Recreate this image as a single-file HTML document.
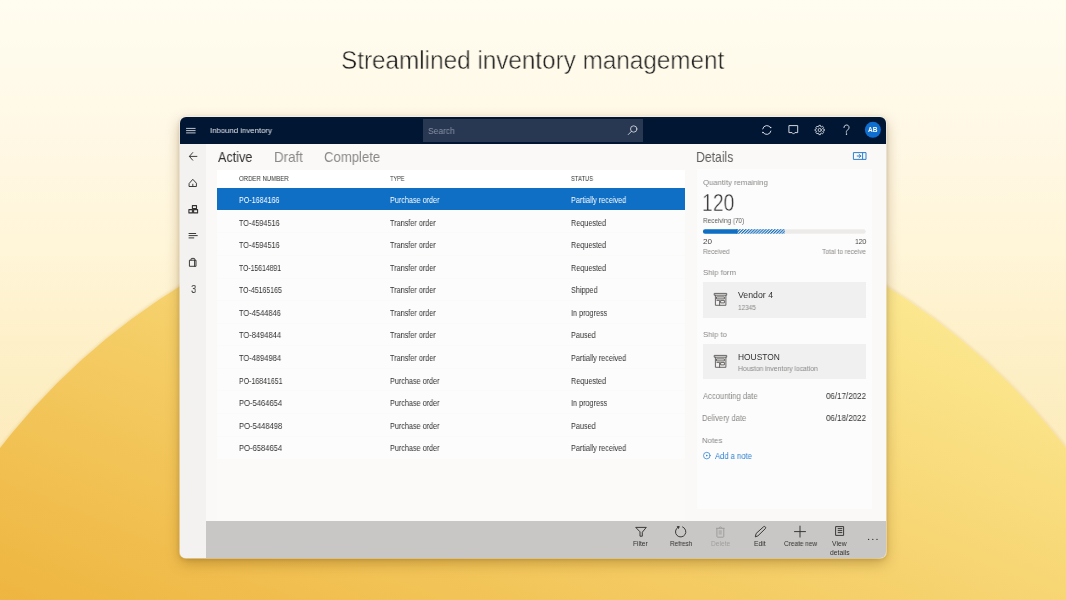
<!DOCTYPE html>
<html><head><meta charset="utf-8">
<style>
*{margin:0;padding:0;box-sizing:border-box}
html,body{width:1066px;height:600px;overflow:hidden}
body{position:relative;font-family:"Liberation Sans",sans-serif;
background:linear-gradient(180deg,#fffdf0 0px,#fff8e6 130px,#fff5d8 250px,#fdefc5 370px,#fcebbd 460px,#fbe8b6 600px)}
.a{position:absolute}
.t{position:absolute;white-space:nowrap;line-height:1;transform-origin:0 0;will-change:transform}
#circle{left:-140px;top:186px;width:1346px;height:1346px;border-radius:50%;
background:linear-gradient(22deg,#eeb43e 51.4%,#fce992 89%);box-shadow:0 0 3px 1px rgba(190,130,20,.18)}
#win{left:180px;top:117px;width:706px;height:441px;border-radius:6px;overflow:hidden;background:#faf9f8;
box-shadow:0 0 0 0.8px rgba(255,255,255,.55),0 5px 14px rgba(110,70,0,.36),0 1px 4px rgba(60,40,0,.18)}
</style></head><body>
<div id="circle" class="a"></div>
<div id="win" class="a">
  <div class="a" style="left:0;top:0;width:706px;height:26.8px;background:#001633"></div>
  <div class="a" style="left:242.5px;top:2px;width:220.8px;height:22.7px;background:#283752"></div>
  <div class="a" style="left:0;top:26.8px;width:26.2px;height:420px;background:#f3f2f1"></div>
  <div class="a" style="left:26px;top:404px;width:680px;height:37px;background:#c8c7c6"></div>
  <!-- table -->
  <div class="a" style="left:37px;top:52.7px;width:468.3px;height:18.1px;background:#ffffff"></div>
  <div class="a" style="left:37px;top:70.8px;width:468.3px;height:270.8px;background:#fcfcfc"></div>
  <div class="a" style="left:37px;top:70.8px;width:468.3px;height:21.9px;background:#0f6fc5"></div>
  <div class="a" style="left:37px;top:115.44px;width:468.3px;height:1px;background:#fafaf9"></div>
  <div class="a" style="left:37px;top:138.01px;width:468.3px;height:1px;background:#fafaf9"></div>
  <div class="a" style="left:37px;top:160.58px;width:468.3px;height:1px;background:#fafaf9"></div>
  <div class="a" style="left:37px;top:183.15px;width:468.3px;height:1px;background:#fafaf9"></div>
  <div class="a" style="left:37px;top:205.72px;width:468.3px;height:1px;background:#fafaf9"></div>
  <div class="a" style="left:37px;top:228.29px;width:468.3px;height:1px;background:#fafaf9"></div>
  <div class="a" style="left:37px;top:250.86px;width:468.3px;height:1px;background:#fafaf9"></div>
  <div class="a" style="left:37px;top:273.43px;width:468.3px;height:1px;background:#fafaf9"></div>
  <div class="a" style="left:37px;top:296.00px;width:468.3px;height:1px;background:#fafaf9"></div>
  <div class="a" style="left:37px;top:318.57px;width:468.3px;height:1px;background:#fafaf9"></div>
  <div class="a" style="left:37px;top:92.7px;width:468.3px;height:1px;background:#ffffff"></div>
  <div class="a" style="left:37px;top:341.6px;width:468.3px;height:62.5px;background:#fbfaf9"></div>
  <!-- details card -->
  <div class="a" style="left:517px;top:52.3px;width:175px;height:340px;background:#fcfcfc"></div>
  <div class="a" style="left:523px;top:165.1px;width:163.2px;height:35.6px;background:#f0f0f0"></div>
  <div class="a" style="left:523px;top:227px;width:163.2px;height:35.1px;background:#f0f0f0"></div>
</div>
<svg class="a" style="left:0;top:0" width="1066" height="600" viewBox="0 0 1066 600" fill="none" stroke-linecap="round" stroke-linejoin="round">
  <!-- hamburger -->
  <g stroke="#d6d9df" stroke-width="0.9">
    <path d="M186.5 128.4H195.2M186.5 130.6H195.2M186.5 132.9H195.2"/>
  </g>
  <!-- search icon -->
  <g stroke="#cfd3da" stroke-width="0.9">
    <circle cx="633.7" cy="129" r="3.2"/>
    <path d="M631.4 131.4L628.2 134.6"/>
  </g>
  <!-- sync -->
  <g stroke="#dfe2e8" stroke-width="0.95">
    <path d="M762.7 128.9A4.3 4.3 0 0 1 770.6 127.7"/>
    <path d="M770.9 131.1A4.3 4.3 0 0 1 763 132.3"/>
    <circle cx="770.7" cy="127.6" r="0.75" fill="#dfe2e8" stroke="none"/>
    <circle cx="762.9" cy="132.4" r="0.75" fill="#dfe2e8" stroke="none"/>
  </g>
  <!-- chat -->
  <g stroke="#dfe2e8" stroke-width="0.95">
    <path d="M789.3 125.6H797.7V132.6H794.9L793.5 134.1L792.1 132.6H789.3Z"/>
  </g>
  <!-- gear -->
  <g stroke="#dfe2e8" stroke-width="0.85">
    <path d="M823.04 128.97L824.33 129.20L824.33 130.80L823.04 131.03L822.80 131.63L823.54 132.71L822.41 133.84L821.33 133.10L820.73 133.34L820.50 134.63L818.90 134.63L818.67 133.34L818.07 133.10L816.99 133.84L815.86 132.71L816.60 131.63L816.36 131.03L815.07 130.80L815.07 129.20L816.36 128.97L816.60 128.37L815.86 127.29L816.99 126.16L818.07 126.90L818.67 126.66L818.90 125.37L820.50 125.37L820.73 126.66L821.33 126.90L822.41 126.16L823.54 127.29L822.80 128.37Z"/>
    <circle cx="819.7" cy="130" r="1.6"/>
  </g>
  <!-- ? -->
  <g stroke="#dfe2e8" stroke-width="0.9">
    <path d="M843.9 127.6A2.6 2.6 0 1 1 847.6 129.9C846.6 130.5 846.3 131.1 846.3 132.3"/>
    <circle cx="846.3" cy="134.1" r="0.3" fill="#dfe2e8"/>
  </g>
  <!-- avatar -->
  <circle cx="872.9" cy="129.8" r="8" fill="#0f6fd0"/>
  <!-- rail icons -->
  <g stroke="#323130" stroke-width="0.95">
    <path d="M196.9 156.4H189.6M192.7 152.6L189.4 156.4L192.7 160.2"/>
    <path d="M189.4 183.2L192.8 179.3L196.4 183.2V186.5H189.4ZM192.8 186.5V184.2"/>
    <path d="M192.4 205.6H196.5V208.6H192.4ZM188.9 209.6H192.4V212.9H188.9ZM193.6 209.6H197.6V212.9H193.6Z" stroke-width="1.1"/>
    <path d="M189 233.5H195.7M189 235.6H197.3M189 237.9H193.8"/>
    <path d="M189.8 260.2H196V266.3H189.8ZM191 260.1V259.2Q191 258.4 191.8 258.4H194Q194.8 258.4 194.8 259.2V260.1M194.6 260.4V266.2"/>
  </g>
  <!-- expand details icon -->
  <g stroke="#2b7fd0" stroke-width="1">
    <rect x="853.8" y="152.6" width="12.2" height="6.8"/>
    <path d="M862.6 153V159.2M857.2 156H860.8M859.1 154.4L860.9 156L859.1 157.6"/>
  </g>
  <!-- progress bar -->
  <defs>
    <pattern id="stripe" patternUnits="userSpaceOnUse" width="2.9" height="4.5" patternTransform="translate(0 229.2) skewX(-45)">
      <rect x="0" y="0" width="1.5" height="4.5" fill="#0f6fc5"/>
    </pattern>
  </defs>
  <rect x="702.9" y="229.2" width="162.8" height="4.5" rx="2.25" fill="#edebe9"/>
  <rect x="736" y="229.2" width="48.8" height="4.5" fill="url(#stripe)"/>
  <path d="M705.15 229.2H737.6V233.7H705.15A2.25 2.25 0 0 1 705.15 229.2Z" fill="#0f6fc5"/>
  <!-- building icons -->
  <g stroke="#605e5c" stroke-width="0.95">
    <path d="M714.6 293.4H726.7V295.2H714.6ZM715.4 295.2V305.3H725.9V295.2M716.9 296.9H724.4V298.9H716.9ZM716.9 300.4H719.6V305.3M721 300.4H724.4V302.9H721Z"/>
    <path d="M714.6 355.4H726.7V357.2H714.6ZM715.4 357.2V367.3H725.9V357.2M716.9 358.9H724.4V360.9H716.9ZM716.9 362.4H719.6V367.3M721 362.4H724.4V364.9H721Z"/>
  </g>
  <!-- add note icon -->
  <g stroke="#2b7fd0" stroke-width="0.85">
    <circle cx="706.8" cy="455.6" r="3.3" stroke-width="0.75"/>
    <circle cx="706.8" cy="455.6" r="0.8" fill="#2b7fd0" stroke="none"/>
  </g>
  <!-- bottom bar icons -->
  <g stroke="#323130" stroke-width="0.95">
    <path d="M636.1 527.4H646.3L642.3 532.2V536.2H640V532.2Z"/>
    <path d="M677.9 527.3A5.2 5.2 0 1 0 682.6 526.9"/>
    <path d="M677.6 526.5L679.3 526.6L678.6 528.2Z" fill="#323130" stroke-width="0.8"/>
    <path d="M755.4 536.5L756.1 533.5L763.4 526.9A1.3 1.3 0 0 1 765.3 528.7L758.2 535.6Z"/>
    <path d="M800 526.1V537.1M794.5 531.6H805.5"/>
    <path d="M836 526.6H843.6V535.4H836ZM838.1 528.6H841.9M838.1 530.6H841.9M838.1 532.6H841.9"/>
  </g>
  <g stroke="#9d9b99" stroke-width="0.95">
    <path d="M716.4 528.3H724.2M718.9 528.2Q719.4 526.9 720.4 526.9Q721.4 526.9 721.9 528.2M716.9 528.5V536.4Q716.9 537.2 717.7 537.2H723Q723.8 537.2 723.8 536.4V528.5"/>
    <rect x="718.6" y="530.2" width="3.2" height="4.4" fill="#b2b0ae" stroke="none"/>
  </g>
  <g fill="#323130">
    <circle cx="868.6" cy="539.4" r="0.65"/>
    <circle cx="872.8" cy="539.4" r="0.65"/>
    <circle cx="877" cy="539.4" r="0.65"/>
  </g>
</svg>
<div class="t" style="left:867.8px;top:127.4px;font-size:6.5px;color:#fff;font-weight:bold">AB</div>
<div class="t" style="left:341.09px;top:46.73px;font-size:26.09px;color:#1e1e1e;transform:scaleX(0.9309);-webkit-text-stroke:0.5px #fffaea;">Streamlined inventory management</div>
<div class="t" style="left:209.50px;top:126.50px;font-size:8.12px;color:#e6e8ec;transform:scaleX(0.9594);">Inbound inventory</div>
<div class="t" style="left:427.78px;top:127.01px;font-size:8.70px;color:#8992a3;transform:scaleX(0.9728);">Search</div>
<div class="t" style="left:217.60px;top:150.33px;font-size:14.20px;color:#323130;transform:scaleX(0.8880);">Active</div>
<div class="t" style="left:273.63px;top:150.33px;font-size:14.20px;color:#8a8886;transform:scaleX(0.9410);">Draft</div>
<div class="t" style="left:324.14px;top:150.33px;font-size:14.20px;color:#8a8886;transform:scaleX(0.9247);">Complete</div>
<div class="t" style="left:190.52px;top:283.71px;font-size:10.58px;color:#323130;transform:scaleX(0.9050);">3</div>
<div class="t" style="left:239.20px;top:176.21px;font-size:6.81px;color:#323130;transform:scaleX(0.8859);">ORDER NUMBER</div>
<div class="t" style="left:389.99px;top:176.21px;font-size:6.81px;color:#323130;transform:scaleX(0.8118);">TYPE</div>
<div class="t" style="left:570.51px;top:176.21px;font-size:6.81px;color:#323130;transform:scaleX(0.8570);">STATUS</div>
<div class="t" style="left:239.03px;top:196.03px;font-size:8.55px;color:#ffffff;transform:scaleX(0.8338);">PO-1684166</div>
<div class="t" style="left:389.92px;top:196.03px;font-size:8.55px;color:#ffffff;transform:scaleX(0.8486);">Purchase order</div>
<div class="t" style="left:570.62px;top:196.03px;font-size:8.55px;color:#ffffff;transform:scaleX(0.8486);">Partially received</div>
<div class="t" style="left:239.45px;top:218.60px;font-size:8.55px;color:#323130;transform:scaleX(0.8502);">TO-4594516</div>
<div class="t" style="left:390.35px;top:218.60px;font-size:8.55px;color:#323130;transform:scaleX(0.8486);">Transfer order</div>
<div class="t" style="left:570.62px;top:218.60px;font-size:8.55px;color:#323130;transform:scaleX(0.8486);">Requested</div>
<div class="t" style="left:239.45px;top:241.17px;font-size:8.55px;color:#323130;transform:scaleX(0.8502);">TO-4594516</div>
<div class="t" style="left:390.35px;top:241.17px;font-size:8.55px;color:#323130;transform:scaleX(0.8486);">Transfer order</div>
<div class="t" style="left:570.62px;top:241.17px;font-size:8.55px;color:#323130;transform:scaleX(0.8486);">Requested</div>
<div class="t" style="left:239.46px;top:263.74px;font-size:8.55px;color:#323130;transform:scaleX(0.8008);">TO-15614891</div>
<div class="t" style="left:390.35px;top:263.74px;font-size:8.55px;color:#323130;transform:scaleX(0.8486);">Transfer order</div>
<div class="t" style="left:570.62px;top:263.74px;font-size:8.55px;color:#323130;transform:scaleX(0.8486);">Requested</div>
<div class="t" style="left:239.46px;top:286.31px;font-size:8.55px;color:#323130;transform:scaleX(0.8167);">TO-45165165</div>
<div class="t" style="left:390.35px;top:286.31px;font-size:8.55px;color:#323130;transform:scaleX(0.8486);">Transfer order</div>
<div class="t" style="left:570.84px;top:286.31px;font-size:8.55px;color:#323130;transform:scaleX(0.8486);">Shipped</div>
<div class="t" style="left:239.45px;top:308.88px;font-size:8.55px;color:#323130;transform:scaleX(0.8755);">TO-4544846</div>
<div class="t" style="left:390.35px;top:308.88px;font-size:8.55px;color:#323130;transform:scaleX(0.8486);">Transfer order</div>
<div class="t" style="left:570.55px;top:308.88px;font-size:8.55px;color:#323130;transform:scaleX(0.8486);">In progress</div>
<div class="t" style="left:239.45px;top:331.45px;font-size:8.55px;color:#323130;transform:scaleX(0.8787);">TO-8494844</div>
<div class="t" style="left:390.35px;top:331.45px;font-size:8.55px;color:#323130;transform:scaleX(0.8486);">Transfer order</div>
<div class="t" style="left:570.62px;top:331.45px;font-size:8.55px;color:#323130;transform:scaleX(0.8486);">Paused</div>
<div class="t" style="left:239.45px;top:354.02px;font-size:8.55px;color:#323130;transform:scaleX(0.8787);">TO-4894984</div>
<div class="t" style="left:390.35px;top:354.02px;font-size:8.55px;color:#323130;transform:scaleX(0.8486);">Transfer order</div>
<div class="t" style="left:570.62px;top:354.02px;font-size:8.55px;color:#323130;transform:scaleX(0.8486);">Partially received</div>
<div class="t" style="left:239.04px;top:376.59px;font-size:8.55px;color:#323130;transform:scaleX(0.8167);">PO-16841651</div>
<div class="t" style="left:389.92px;top:376.59px;font-size:8.55px;color:#323130;transform:scaleX(0.8486);">Purchase order</div>
<div class="t" style="left:570.62px;top:376.59px;font-size:8.55px;color:#323130;transform:scaleX(0.8486);">Requested</div>
<div class="t" style="left:238.99px;top:399.16px;font-size:8.55px;color:#323130;transform:scaleX(0.8876);">PO-5464654</div>
<div class="t" style="left:389.92px;top:399.16px;font-size:8.55px;color:#323130;transform:scaleX(0.8486);">Purchase order</div>
<div class="t" style="left:570.55px;top:399.16px;font-size:8.55px;color:#323130;transform:scaleX(0.8486);">In progress</div>
<div class="t" style="left:238.99px;top:421.73px;font-size:8.55px;color:#323130;transform:scaleX(0.8908);">PO-5448498</div>
<div class="t" style="left:389.92px;top:421.73px;font-size:8.55px;color:#323130;transform:scaleX(0.8486);">Purchase order</div>
<div class="t" style="left:570.62px;top:421.73px;font-size:8.55px;color:#323130;transform:scaleX(0.8486);">Paused</div>
<div class="t" style="left:238.99px;top:444.30px;font-size:8.55px;color:#323130;transform:scaleX(0.8876);">PO-6584654</div>
<div class="t" style="left:389.92px;top:444.30px;font-size:8.55px;color:#323130;transform:scaleX(0.8486);">Purchase order</div>
<div class="t" style="left:570.62px;top:444.30px;font-size:8.55px;color:#323130;transform:scaleX(0.8486);">Partially received</div>
<div class="t" style="left:696.02px;top:149.83px;font-size:14.20px;color:#605e5c;transform:scaleX(0.8621);">Details</div>
<div class="t" style="left:702.51px;top:178.50px;font-size:8.12px;color:#8a8886;transform:scaleX(0.9524);">Quantity remaining</div>
<div class="t" style="left:701.85px;top:191.79px;font-size:23.19px;color:#2a2928;transform:scaleX(0.8375);-webkit-text-stroke:0.45px #fcfcfc;">120</div>
<div class="t" style="left:702.89px;top:217.19px;font-size:7.54px;color:#605e5c;transform:scaleX(0.8488);">Receiving (70)</div>
<div class="t" style="left:702.71px;top:237.60px;font-size:8.12px;color:#484644;transform:scaleX(0.9570);">20</div>
<div class="t" style="left:854.96px;top:237.50px;font-size:8.12px;color:#484644;transform:scaleX(0.8347);">120</div>
<div class="t" style="left:703.19px;top:248.69px;font-size:6.96px;color:#8a8886;transform:scaleX(0.9154);">Received</div>
<div class="t" style="left:822.37px;top:248.89px;font-size:6.96px;color:#8a8886;transform:scaleX(0.9389);">Total to receive</div>
<div class="t" style="left:702.72px;top:268.82px;font-size:7.97px;color:#8a8886;transform:scaleX(0.9657);">Ship form</div>
<div class="t" style="left:738.41px;top:290.86px;font-size:8.41px;color:#323130;transform:scaleX(1.0398);">Vendor 4</div>
<div class="t" style="left:738.38px;top:304.61px;font-size:6.81px;color:#8a8886;transform:scaleX(0.9493);">12345</div>
<div class="t" style="left:702.62px;top:331.12px;font-size:7.97px;color:#8a8886;transform:scaleX(0.9606);">Ship to</div>
<div class="t" style="left:738.13px;top:353.68px;font-size:8.26px;color:#323130;transform:scaleX(1.0171);">HOUSTON</div>
<div class="t" style="left:738.26px;top:366.29px;font-size:6.96px;color:#8a8886;transform:scaleX(0.9744);">Houston inventory location</div>
<div class="t" style="left:703.10px;top:392.01px;font-size:8.70px;color:#8a8886;transform:scaleX(0.8758);">Accounting date</div>
<div class="t" style="left:826.38px;top:392.01px;font-size:8.70px;color:#323130;transform:scaleX(0.9186);">06/17/2022</div>
<div class="t" style="left:702.49px;top:413.91px;font-size:8.70px;color:#8a8886;transform:scaleX(0.8741);">Delivery date</div>
<div class="t" style="left:826.38px;top:413.91px;font-size:8.70px;color:#323130;transform:scaleX(0.9186);">06/18/2022</div>
<div class="t" style="left:702.48px;top:436.60px;font-size:8.12px;color:#8a8886;transform:scaleX(0.9600);">Notes</div>
<div class="t" style="left:715.40px;top:452.11px;font-size:8.70px;color:#2b7fd0;transform:scaleX(0.8787);">Add a note</div>
<div class="t" style="left:633.47px;top:540.83px;font-size:6.67px;color:#323130;transform:scaleX(0.9930);">Filter</div>
<div class="t" style="left:669.59px;top:540.83px;font-size:6.67px;color:#323130;transform:scaleX(0.9554);">Refresh</div>
<div class="t" style="left:711.18px;top:540.83px;font-size:6.67px;color:#a19f9d;transform:scaleX(0.9837);">Delete</div>
<div class="t" style="left:754.25px;top:540.83px;font-size:6.67px;color:#323130;transform:scaleX(1.0244);">Edit</div>
<div class="t" style="left:783.58px;top:540.83px;font-size:6.67px;color:#323130;transform:scaleX(0.9723);">Create new</div>
<div class="t" style="left:832.33px;top:540.83px;font-size:6.67px;color:#323130;transform:scaleX(1.0164);">View</div>
<div class="t" style="left:829.73px;top:550.13px;font-size:6.67px;color:#323130;transform:scaleX(1.0142);">details</div>
</body></html>
